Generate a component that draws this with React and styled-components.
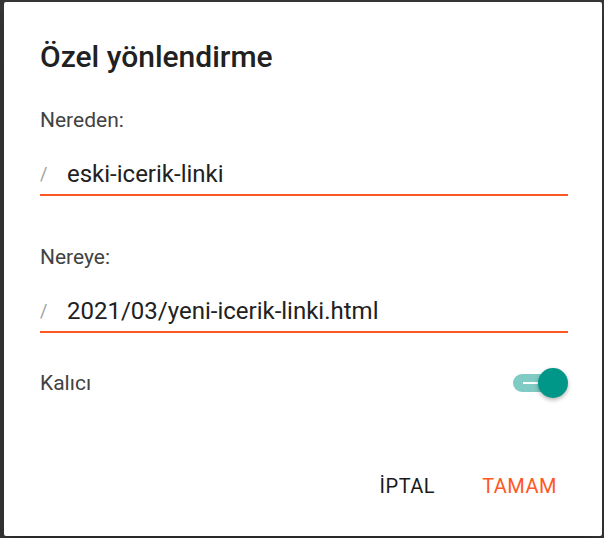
import styled, { createGlobalStyle } from "styled-components"

const GlobalStyle = createGlobalStyle`
    html, body {
        margin: 0;
        padding: 0;
        background: #363636;
    }
    body {
        font-family: Roboto, "Noto Sans", "Liberation Sans", sans-serif;
        -webkit-font-smoothing: antialiased;
    }
`

const Backdrop = styled.div`
    width: 604px;
    height: 538px;
    padding: 2px 2px 2px 4px;
    box-sizing: border-box;
`

const Dialog = styled.div`
    display: flex;
    flex-direction: column;
    box-sizing: border-box;
    width: 598px;
    height: 534px;
    padding: 38px 34px 32px 36px;
    background: #fff;
    border-radius: 2px;
    box-shadow: 0 11px 15px -7px rgba(0,0,0,.2), 0 24px 38px 3px rgba(0,0,0,.14);
`

const Title = styled.h2`
    margin: 0;
    font-size: 30px;
    line-height: 34px;
    font-weight: 500;
    color: #212121;
`

const Label = styled.div`
    margin-top: ${p => p.$gap}px;
    font-size: 21px;
    line-height: 24px;
    color: #424242;
`

const Field = styled.div`
    display: flex;
    align-items: center;
    margin-top: 28px;
    padding-bottom: 6px;
    border-bottom: 2px solid #ff5722;
`

const Prefix = styled.span`
    width: 27px;
    flex: none;
    font-size: 18px;
    line-height: 28px;
    color: #9e9e9e;
`

const Value = styled.span`
    font-size: 24px;
    line-height: 28px;
    color: #212121;
`

const SwitchRow = styled.div`
    display: flex;
    align-items: center;
    justify-content: space-between;
    margin-top: 35px;
    height: 30px;
`

const Toggle = styled.div`
    position: relative;
    width: 55px;
    height: 30px;
`

const Track = styled.div`
    margin-top: 6px;
    width: 48px;
    height: 18px;
    border-radius: 9px;
    background: #80cbc4;
    display: flex;
    align-items: center;
    padding-left: 10px;
    box-sizing: border-box;
    &::before {
        content: "";
        width: 18px;
        height: 1.5px;
        background: #fff;
    }
`

const Thumb = styled.div`
    position: absolute;
    top: 0;
    right: 0;
    width: 30px;
    height: 30px;
    border-radius: 50%;
    background: #009688;
    box-shadow: 0 2px 4px rgba(0,0,0,.3);
`

const Actions = styled.div`
    margin-top: auto;
    display: flex;
    justify-content: flex-end;
    gap: 23px;
    margin-right: -1px;
`

const Button = styled.button`
    border: none;
    background: none;
    padding: 8px 12px;
    font-family: inherit;
    font-size: 20px;
    line-height: 20px;
    font-weight: 400;
    letter-spacing: 0.5px;
    color: ${p => p.$primary ? "#ff5722" : "#1a1a1a"};
    cursor: pointer;
`

export default function App() {
    return (
        <>
            <GlobalStyle />
            <Backdrop>
                <Dialog>
                    <Title>Özel yönlendirme</Title>

                    <Label $gap={34}>Nereden:</Label>
                    <Field>
                        <Prefix>/</Prefix>
                        <Value>eski-icerik-linki</Value>
                    </Field>

                    <Label $gap={49}>Nereye:</Label>
                    <Field>
                        <Prefix>/</Prefix>
                        <Value>2021/03/yeni-icerik-linki.html</Value>
                    </Field>

                    <SwitchRow>
                        <Label $gap={0}>Kalıcı</Label>
                        <Toggle>
                            <Track />
                            <Thumb />
                        </Toggle>
                    </SwitchRow>

                    <Actions>
                        <Button>İPTAL</Button>
                        <Button $primary>TAMAM</Button>
                    </Actions>
                </Dialog>
            </Backdrop>
        </>
    )
}
